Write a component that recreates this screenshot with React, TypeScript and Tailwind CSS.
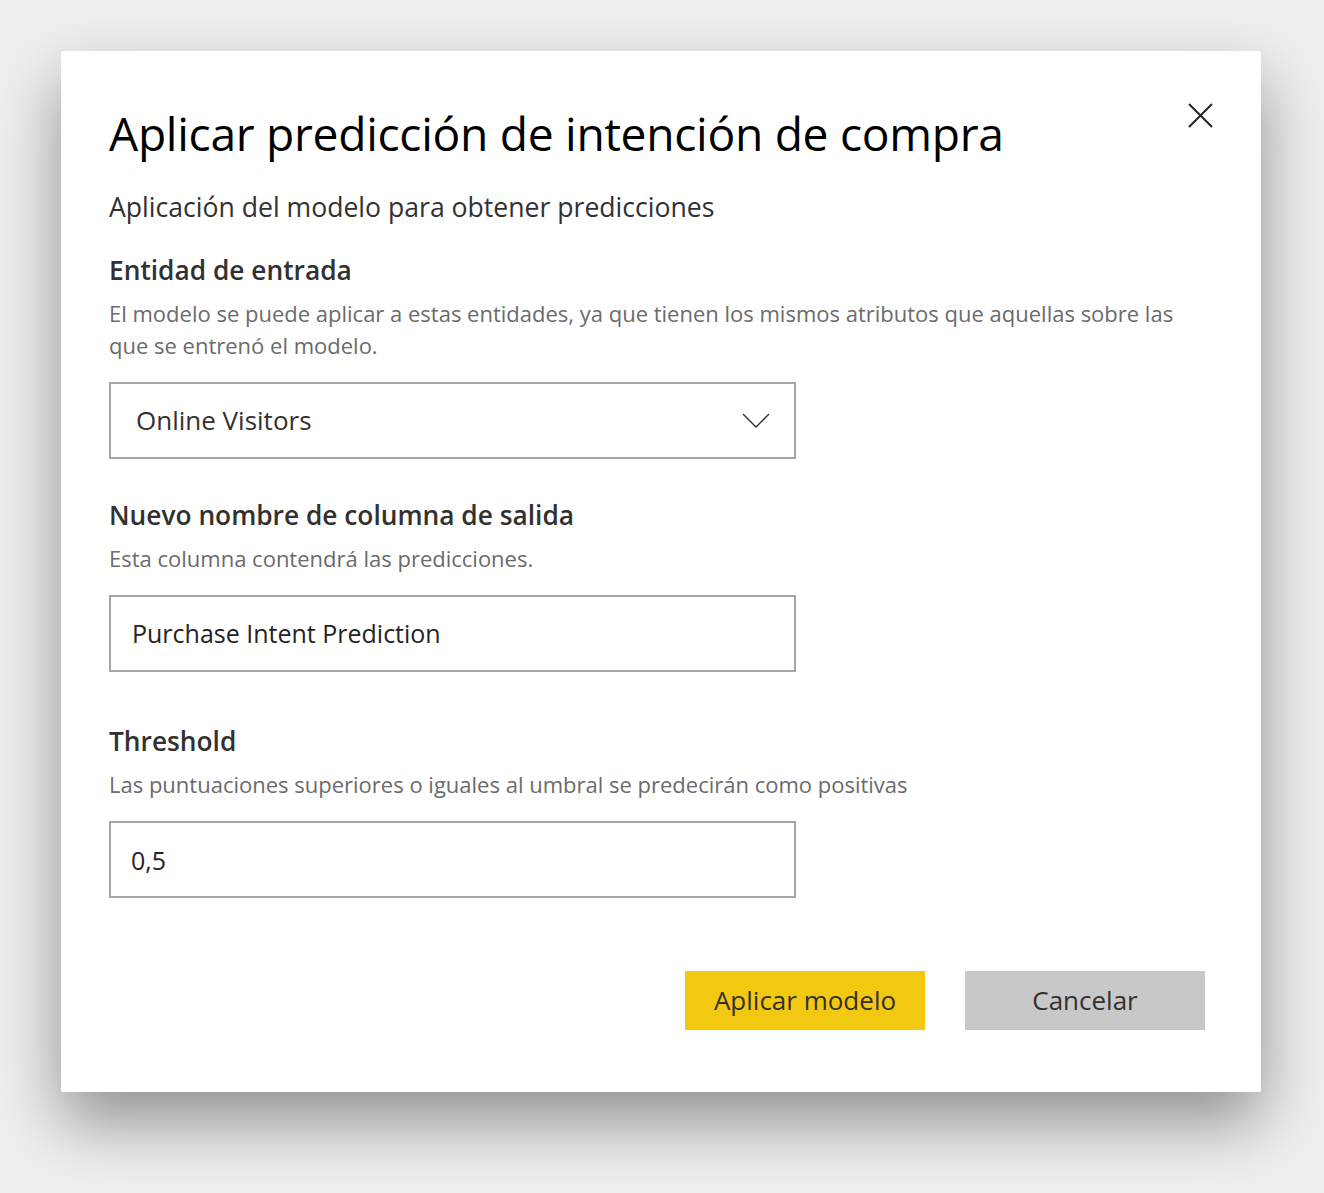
const Field = ({ title, desc, mt, children }: { title: string; desc: string; mt: string; children: React.ReactNode }) => (
  <div className={`flex flex-col ${mt}`}>
    <h2 className="text-[26.3px] leading-[36px] font-semibold text-[#323130]">{title}</h2>
    <p className="mt-[9px] text-[22px] leading-[32px] text-[#6b6b6b]">{desc}</p>
    <div className="mt-[21px]">{children}</div>
  </div>
);

export default function App() {
  return (
    <div className="min-h-screen w-full bg-[#efefef] pt-[51px] pl-[61px] pb-[101px]" style={{ fontFamily: '"Open Sans", "Noto Sans", sans-serif' }}>
      <div className="w-[1200px] h-[1041px] bg-white rounded-[2px] shadow-[0_30px_66px_rgba(0,0,0,0.4)] flex flex-col pt-[51px] pl-[48px] pr-[56px]">
        <div className="flex justify-between items-start">
          <h1 className="text-[46.2px] leading-[64px] text-black tracking-[-0.3px]">Aplicar predicción de intención de compra</h1>
          <button className="mt-[1px] mr-[-8px] text-[#252423]">
            <svg width="25" height="25" viewBox="0 0 25 25" fill="none" stroke="#252423" strokeWidth="2">
              <path d="M1 1 L24 24 M24 1 L1 24" />
            </svg>
          </button>
        </div>
        <p className="mt-[23px] text-[26.6px] leading-[36px] text-[#323130]">Aplicación del modelo para obtener predicciones</p>

        <Field title="Entidad de entrada" mt="mt-[27px]" desc="El modelo se puede aplicar a estas entidades, ya que tienen los mismos atributos que aquellas sobre las que se entrenó el modelo.">
          <div className="w-[687px] h-[77px] border-2 border-[#a6a6a6] flex items-center justify-between pl-[25px] pr-[24px]">
            <span className="text-[26px] text-[#323130]">Online Visitors</span>
            <svg width="28" height="16" viewBox="0 0 28 16" fill="none" stroke="#323130" strokeWidth="1.4">
              <path d="M1 1 L14 14 L27 1" />
            </svg>
          </div>
        </Field>

        <Field title="Nuevo nombre de columna de salida" mt="mt-[38px]" desc="Esta columna contendrá las predicciones.">
          <div className="w-[687px] h-[77px] border-2 border-[#a6a6a6] flex items-center pl-[21px]">
            <span className="text-[25px] text-[#252423]">Purchase Intent Prediction</span>
          </div>
        </Field>

        <Field title="Threshold" mt="mt-[51px]" desc="Las puntuaciones superiores o iguales al umbral se predecirán como positivas">
          <div className="w-[687px] h-[77px] border-2 border-[#a6a6a6] flex items-center pl-[20px] pt-[3px]">
            <span className="text-[25px] text-[#252423]">0,5</span>
          </div>
        </Field>

        <div className="mt-[73px] flex justify-end gap-[40px]">
          <button className="w-[240px] h-[59px] bg-[#f2c811] text-[26px] text-[#323130]">Aplicar modelo</button>
          <button className="w-[240px] h-[59px] bg-[#c8c8c8] text-[26px] text-[#323130]">Cancelar</button>
        </div>
      </div>
    </div>
  );
}
